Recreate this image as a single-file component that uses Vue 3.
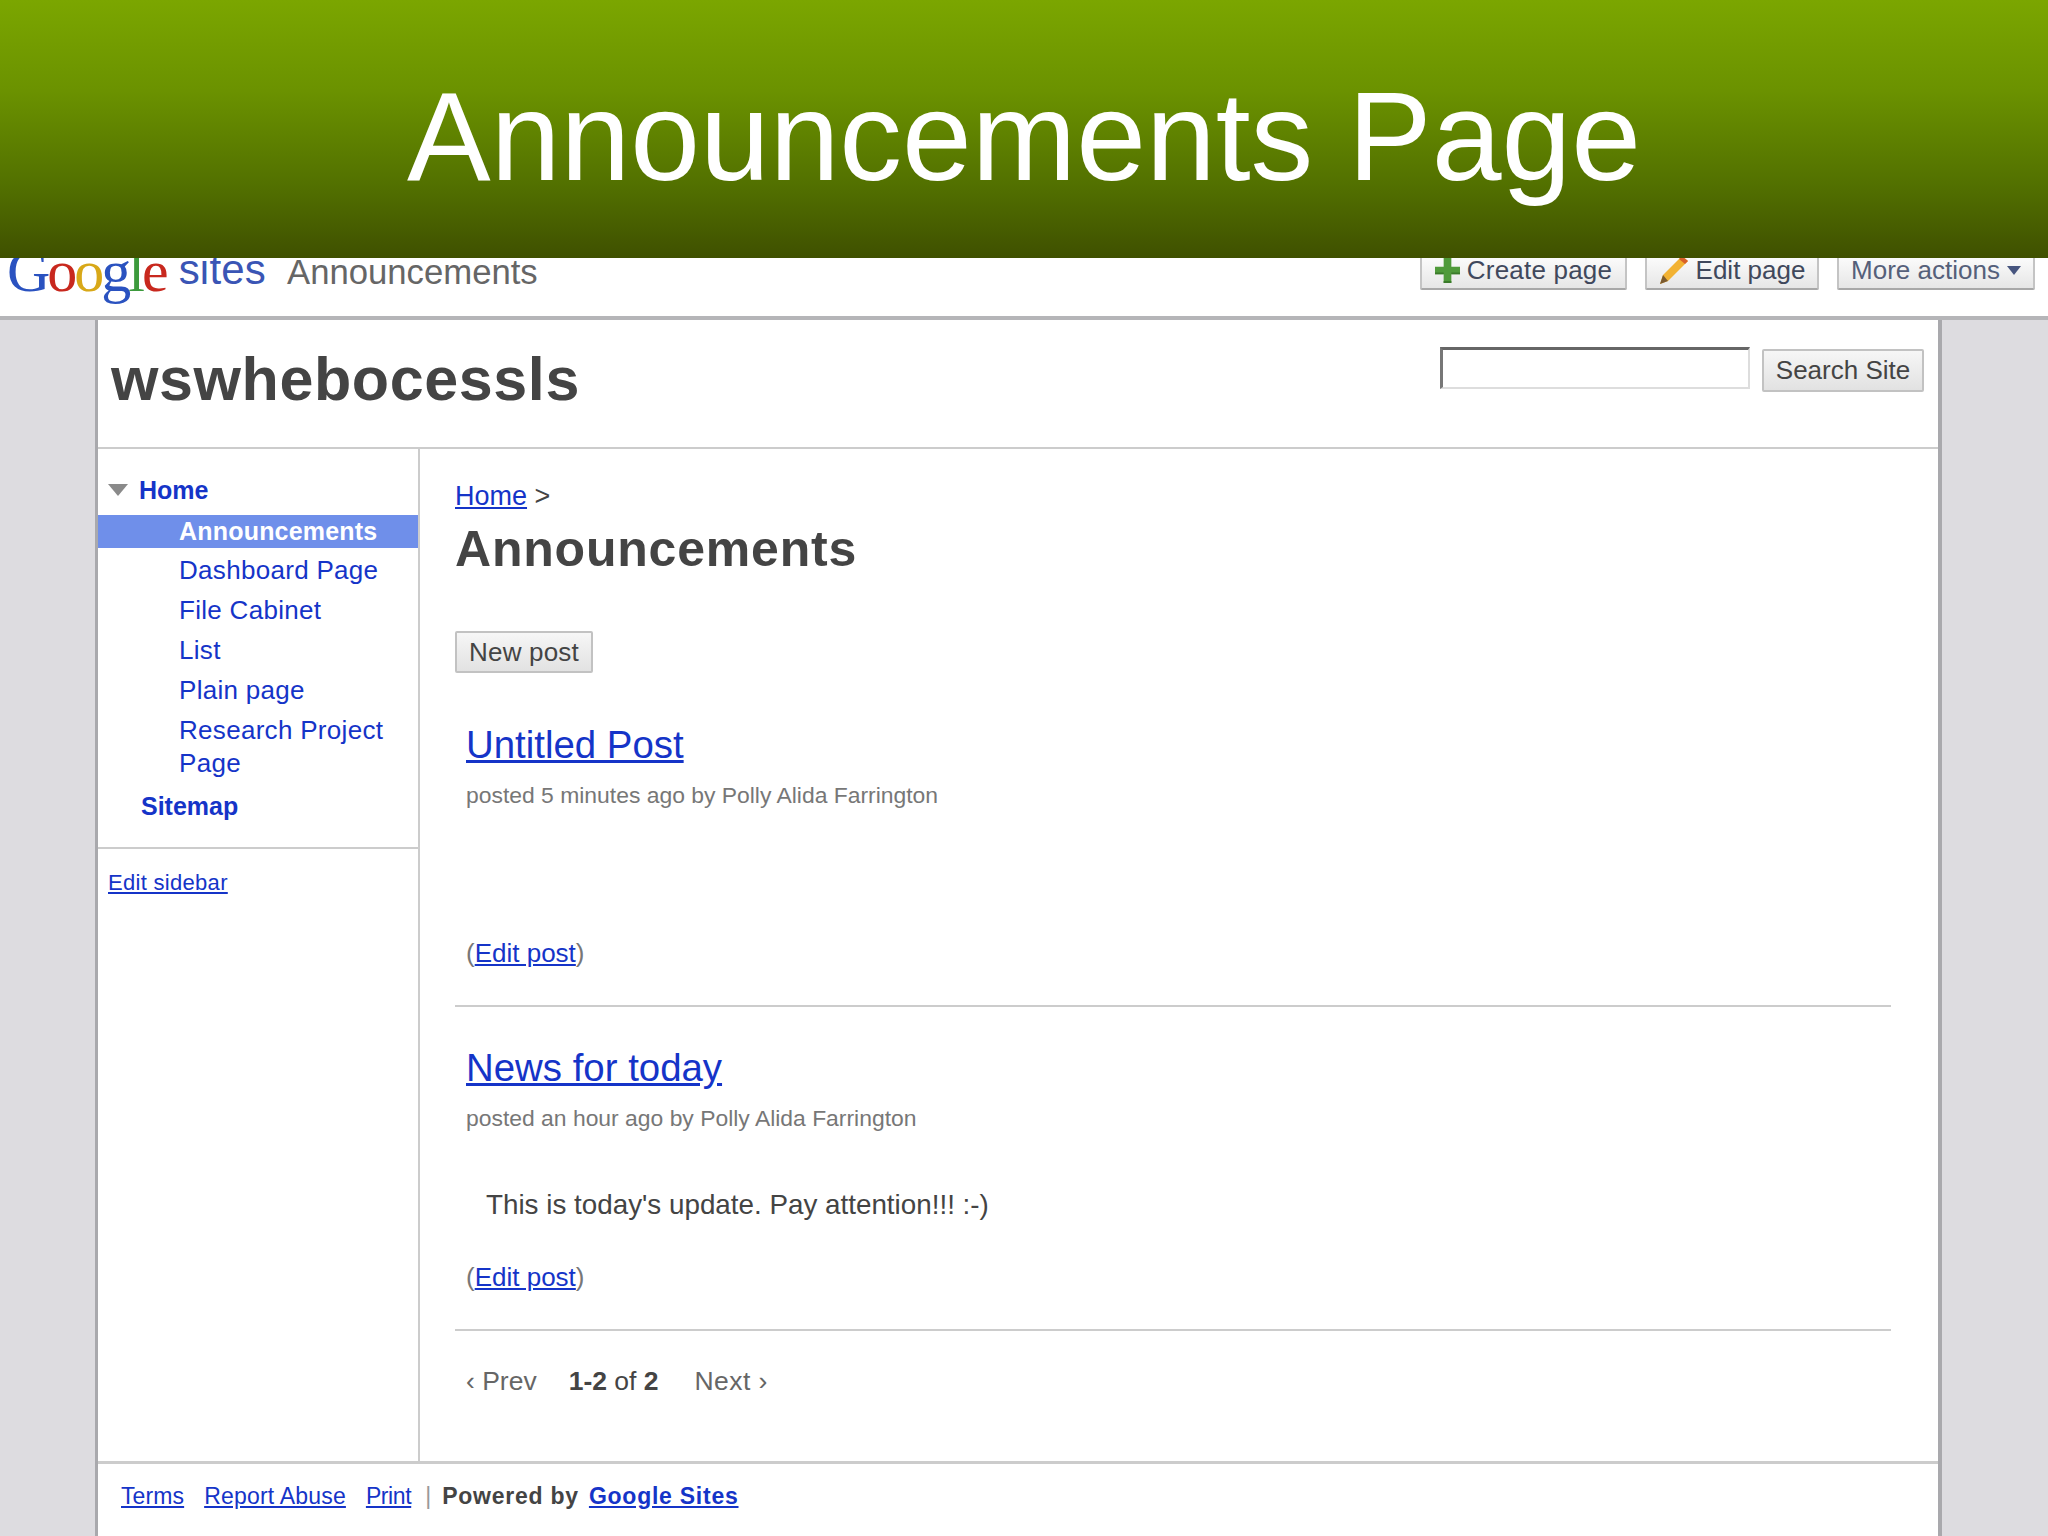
<script setup>
const navItems = [
  { id: 1, label: "Announcements", active: true },
  { id: 2, label: "Dashboard Page" },
  { id: 3, label: "File Cabinet" },
  { id: 4, label: "List" },
  { id: 5, label: "Plain page" },
  { id: 6, label: "Research Project Page" },
];
const posts = [
  { id: 1, title: "Untitled Post", meta: "posted 5 minutes ago by Polly Alida Farrington", body: "" },
  { id: 2, title: "News for today", meta: "posted an hour ago by Polly Alida Farrington", body: "This is today's update. Pay attention!!! :-)" },
];
</script>

<template>
  <div class="slide">
    <header class="banner">
      <h1>Announcements Page</h1>
    </header>

    <div class="topbar">
      <div class="brand">
        <span class="logo"><span class="b">G</span><span class="r">o</span><span class="y">o</span><span class="b">g</span><span class="g">l</span><span class="r">e</span></span>
        <span class="sites">sites</span>
        <span class="crumb-title">Announcements</span>
      </div>
      <div class="actions">
        <a class="tbtn create">
          <svg width="25" height="25" viewBox="0 0 26 26">
            <path d="M9 0h8v9h9v8h-9v9H9v-9H0V9h9z" fill="#4f9a3a" />
            <path d="M0 15h9v2H0zM17 15h9v2h-9zM9 24h8v2H9z" fill="#3a7a2a" />
          </svg>
          Create page
        </a>
        <a class="tbtn edit">
          <svg width="30" height="30" viewBox="0 0 30 30">
            <path d="M23 1l6 5L9 26 1 29l3-9z" fill="#f2b233" />
            <path d="M23 1l6 5-3 3-6-5z" fill="#d8602a" />
            <path d="M4 20l5 6-8 3z" fill="#7a5a30" />
          </svg>
          Edit page
        </a>
        <a class="tbtn more">
          More actions
          <svg width="14" height="9" viewBox="0 0 14 9"><path d="M0 0h14L7 9z" fill="#47557f" /></svg>
        </a>
      </div>
    </div>

    <div class="page">
      <div class="sheet">
        <div class="site-head">
          <div class="site-name">wswhebocessls</div>
          <form class="search" @submit.prevent>
            <input type="text" />
            <button>Search Site</button>
          </form>
        </div>

        <div class="columns">
          <aside class="sidebar">
            <nav class="nav">
              <a class="nav-top home">
                <svg width="20" height="12" viewBox="0 0 20 12"><path d="M0 0h20L10 12z" fill="#8a8a8a" /></svg>
                Home
              </a>
              <a
                v-for="item in navItems"
                :key="item.id"
                class="nav-item"
                :class="{ active: item.active }"
              >{{ item.label }}</a>
              <a class="nav-top sitemap">Sitemap</a>
            </nav>
            <div class="edit-side"><a>Edit sidebar</a></div>
          </aside>

          <main class="content">
            <div class="breadcrumb"><a>Home</a> &gt;</div>
            <h2 class="page-title">Announcements</h2>
            <button class="new-post">New post</button>

            <article v-for="post in posts" :key="post.id" class="post">
              <a class="post-title">{{ post.title }}</a>
              <div class="post-meta">{{ post.meta }}</div>
              <div class="post-body">{{ post.body }}</div>
              <div class="post-edit">(<a>Edit post</a>)</div>
            </article>

            <div class="pager">
              <span>‹ Prev</span>
              <b>1-2 <span class="of">of</span> 2</b>
              <span class="next">Next ›</span>
            </div>
          </main>
        </div>

        <footer class="foot">
          <a class="terms">Terms</a>
          <a class="abuse">Report Abuse</a>
          <a class="print">Print</a>
          <span class="sep">|</span>
          <span class="powered">Powered by <a class="gs">Google Sites</a></span>
        </footer>
      </div>
    </div>
  </div>
</template>

<style>
body {
  margin: 0;
  background: #dddce0;
}
</style>

<style scoped>
.slide {
  width: 2048px;
  height: 1536px;
  overflow: hidden;
  display: flex;
  flex-direction: column;
  font-family: "Liberation Sans", Arial, sans-serif;
  color: #444;
}
a {
  color: #1534c8;
}

.banner {
  height: 258px;
  flex: none;
  background: linear-gradient(#7ba600 0%, #6b9200 35%, #527000 72%, #3f5000 100%);
  display: flex;
  align-items: center;
  justify-content: center;
}
.banner h1 {
  margin: 14px 0 0;
  font-size: 125.4px;
  font-weight: 400;
  color: #fff;
}

.topbar {
  height: 58px;
  flex: none;
  background: #fff;
  overflow: hidden;
  display: flex;
  justify-content: space-between;
  padding: 0 13px 0 7px;
  border-bottom: 4px solid #b5b5b8;
}
.brand {
  display: flex;
  align-items: flex-start;
}
.logo {
  font-family: "Liberation Serif", serif;
  font-size: 60px;
  letter-spacing: -3px;
  line-height: 40px;
  margin-top: -7px;
}
.logo .b { color: #2a52c0; }
.logo .r { color: #c8281e; }
.logo .y { color: #d8a818; }
.logo .g { color: #3c9a3c; }
.sites {
  margin: -12px 0 0 13px;
  font-size: 42px;
  line-height: 48px;
  letter-spacing: 0.2px;
  color: #3a55b5;
}
.crumb-title {
  margin: -6px 0 0 21px;
  font-size: 34.7px;
  line-height: 40px;
  color: #666;
}
.actions {
  display: flex;
  gap: 18px;
  align-items: flex-end;
  height: 32px;
}
.tbtn {
  height: 40px;
  display: flex;
  align-items: center;
  justify-content: center;
  gap: 7px;
  box-sizing: border-box;
  background: linear-gradient(#fff, #e6e6e6);
  border: 2px solid #c4c4c4;
  border-bottom-color: #a8a8a8;
  border-radius: 2px;
  font-size: 26px;
  color: #40485c;
}
.create { width: 207px; letter-spacing: 0.2px; }
.edit { width: 174px; }
.more { width: 198px; color: #55607a; }

.page {
  flex: 1;
  min-height: 0;
  padding: 0 106px 0 95px;
}
.sheet {
  height: 100%;
  background: #fff;
  border-left: 3px solid #a9a9ad;
  border-right: 4px solid #a9a9ad;
  display: flex;
  flex-direction: column;
}

.site-head {
  height: 129px;
  flex: none;
  box-sizing: border-box;
  border-bottom: 2px solid #ccc;
  display: flex;
  justify-content: space-between;
  padding: 27px 14px 0 13px;
}
.site-name {
  font-size: 61px;
  font-weight: 700;
  letter-spacing: 0.6px;
  color: #444;
  line-height: 64px;
}
.search {
  display: flex;
  gap: 12px;
  align-items: flex-start;
}
.search input {
  width: 310px;
  height: 42px;
  box-sizing: border-box;
  border: 2px solid #ddd;
  border-top: 3px solid #666;
  border-left: 3px solid #777;
  background: #fff;
  padding: 0;
}
.search button,
.new-post {
  height: 43px;
  margin-top: 2px;
  background: linear-gradient(#f6f6f6, #e2e2e2);
  border: 2px solid #c2c2c2;
  border-radius: 2px;
  font-family: inherit;
  font-size: 26px;
  color: #444;
  padding: 0;
}
.search button { width: 162px; }

.columns {
  flex: 1;
  display: flex;
  min-height: 0;
}
.sidebar {
  width: 320px;
  flex: none;
  border-right: 2px solid #ccc;
  box-sizing: content-box;
}
.nav {
  height: 400px;
  box-sizing: border-box;
  border-bottom: 2px solid #ccc;
  padding-top: 23px;
  display: flex;
  flex-direction: column;
}
.nav-top {
  font-size: 25px;
  font-weight: 700;
  line-height: 36px;
  text-decoration: none;
  display: block;
}
.home {
  display: flex;
  align-items: center;
  gap: 11px;
  padding-left: 10px;
  margin-bottom: 7px;
}
.sitemap {
  padding-left: 43px;
  margin-top: 1px;
}
.nav-item {
  font-size: 26px;
  line-height: 33px;
  padding: 0 20px 7px 81px;
  letter-spacing: 0.3px;
  text-decoration: none;
}
.nav-item.active {
  background: #6f8fea;
  color: #fff;
  font-weight: 700;
  font-size: 25px;
  letter-spacing: 0.2px;
  height: 33px;
  padding-bottom: 0;
  margin-bottom: 6px;
}
.edit-side {
  padding: 21px 0 0 10px;
  font-size: 22px;
  letter-spacing: 0.3px;
}
.edit-side a,
.breadcrumb a,
.post-title,
.post-edit a,
.foot a {
  text-decoration: underline;
}

.content {
  flex: 1;
  padding: 29px 47px 0 35px;
  min-width: 0;
}
.breadcrumb {
  font-size: 27px;
  line-height: 36px;
  color: #444;
}
.page-title {
  margin: 7px 0 0;
  font-size: 50px;
  letter-spacing: 0.8px;
  line-height: 56px;
  font-weight: 700;
  color: #444;
}
.new-post {
  display: block;
  width: 138px;
  height: 42px;
  margin-top: 54px;
  letter-spacing: 0.2px;
}
.post {
  height: 324px;
  box-sizing: border-box;
  border-bottom: 2px solid #ccc;
  padding: 38px 0 0 11px;
  display: flex;
  flex-direction: column;
}
.post:first-of-type {
  height: 334px;
  padding-top: 49px;
}
.post-title {
  font-size: 38.4px;
  line-height: 46px;
}
.post-meta {
  margin-top: 12px;
  font-size: 22.9px;
  line-height: 30px;
  color: #777;
}
.post-body {
  flex: 1;
  padding: 54px 0 0 20px;
  font-size: 27.8px;
  line-height: 36px;
  color: #444;
}
.post-edit {
  font-size: 26px;
  line-height: 34px;
  margin-bottom: 35px;
  color: #777;
}
.pager {
  display: flex;
  gap: 32px;
  padding: 32px 0 0 11px;
  font-size: 26.5px;
  line-height: 36px;
  color: #666;
}
.pager b {
  color: #444;
}
.next {
  margin-left: 4px;
  letter-spacing: 0.4px;
}
.of {
  font-weight: 400;
}

.foot {
  flex: none;
  height: 75px;
  box-sizing: border-box;
  border-top: 3px solid #ccc;
  display: flex;
  align-items: center;
  gap: 20px;
  padding: 0 0 8px 23px;
  font-size: 23px;
}
.terms {
  letter-spacing: 0.1px;
}
.abuse {
  letter-spacing: 0.2px;
}
.print {
  letter-spacing: -0.4px;
}
.sep {
  color: #999;
  margin: 0 -9px 0 -6px;
}
.powered {
  font-weight: 700;
  letter-spacing: 0.75px;
  color: #444;
}
.gs {
  margin-left: 3px;
}
</style>
